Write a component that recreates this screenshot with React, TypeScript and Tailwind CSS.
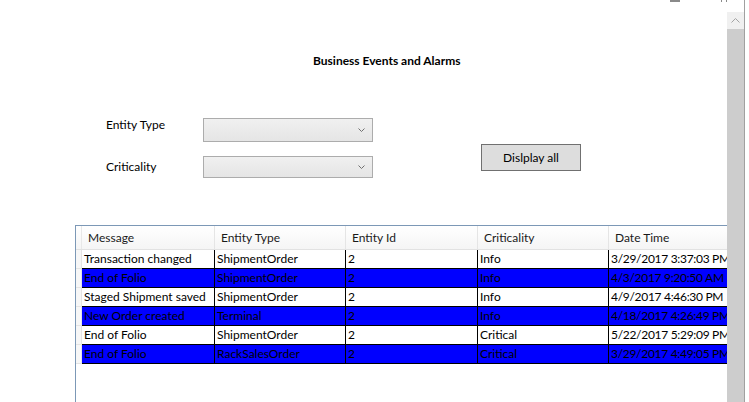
import React from "react";

type Row = {
  message: string;
  entityType: string;
  entityId: string;
  criticality: string;
  dateTime: string;
};

const ROWS: Row[] = [
  { message: "Transaction changed", entityType: "ShipmentOrder", entityId: "2", criticality: "Info", dateTime: "3/29/2017 3:37:03 PM" },
  { message: "End of Folio", entityType: "ShipmentOrder", entityId: "2", criticality: "Info", dateTime: "4/3/2017 9:20:50 AM" },
  { message: "Staged Shipment saved", entityType: "ShipmentOrder", entityId: "2", criticality: "Info", dateTime: "4/9/2017 4:46:30 PM" },
  { message: "New Order created", entityType: "Terminal", entityId: "2", criticality: "Info", dateTime: "4/18/2017 4:26:49 PM" },
  { message: "End of Folio", entityType: "ShipmentOrder", entityId: "2", criticality: "Critical", dateTime: "5/22/2017 5:29:09 PM" },
  { message: "End of Folio", entityType: "RackSalesOrder", entityId: "2", criticality: "Critical", dateTime: "3/29/2017 4:49:05 PM" },
];

const COLUMNS = [
  { title: "Message", width: "w-[133px]" },
  { title: "Entity Type", width: "w-[131px]" },
  { title: "Entity Id", width: "w-[132px]" },
  { title: "Criticality", width: "w-[131px]" },
  { title: "Date Time", width: "w-[150px]" },
];

function ComboBox({ height }: { height: string }) {
  return (
    <div
      className={`flex w-[170px] ${height} items-center justify-end border border-[#acacac] bg-gradient-to-b from-[#f0f0f0] to-[#e5e5e5] pr-[7px]`}
    >
      <svg width="7" height="4" viewBox="0 0 7 4" className="text-[#707070]">
        <path d="M0.5 0.5 L3.5 3.5 L6.5 0.5" fill="none" stroke="currentColor" strokeWidth="1" />
      </svg>
    </div>
  );
}

function Grid() {
  return (
    <div className="ml-[75px] h-[177px] w-[652px] overflow-hidden border-l border-t border-[#7c98b6]">
      <div className="flex h-[24px] w-max border-b border-[#e2e2e2] bg-gradient-to-b from-white to-[#f5f5f5]">
        <div className="w-[6px] border-r border-[#e8e8e8]" />
        {COLUMNS.map((c) => (
          <div
            key={c.title}
            className={`${c.width} flex items-center border-r border-[#e5e5e5] pl-[6px] text-[12px] text-[#1a1a1a]`}
          >
            {c.title}
          </div>
        ))}
      </div>
      {ROWS.map((r, i) => {
        const blue = i % 2 === 1;
        const cells = [r.message, r.entityType, r.entityId, r.criticality, r.dateTime];
        return (
          <div key={i} className="flex h-[19px] w-max">
            <div className="w-[6px] border-b border-r border-[#e4e4e4] bg-[#f7f7f7]" />
            <div className={`flex border-b border-black ${blue ? "bg-[#0000ff]" : "bg-white"}`}>
              {cells.map((v, j) => (
                <div
                  key={j}
                  className={`${COLUMNS[j].width} flex items-center whitespace-nowrap border-r border-black pl-[2px] text-[12px] text-black ${
                    j === 4 ? "tracking-[-0.3px]" : ""
                  }`}
                >
                  {v}
                </div>
              ))}
            </div>
          </div>
        );
      })}
    </div>
  );
}

export default function App() {
  return (
    <div
      className="relative flex h-[402px] w-[749px] overflow-hidden bg-white text-black"
      style={{ fontFamily: "Lato, 'Noto Sans', sans-serif" }}
    >
      {/* window caption buttons, cut off at the top */}
      <div className="absolute left-[670px] top-0 h-[2px] w-[10px] bg-[#8a8a8a]" />
      <div className="absolute left-[721px] top-0 h-[2px] w-px bg-[#8a8a8a]" />
      <div className="absolute left-[726px] top-0 h-[2px] w-px bg-[#8a8a8a]" />

      <div className="flex w-[727px] flex-col">
        <div className="ml-[313px] mt-[53px] h-[16px] text-[12px] font-bold leading-[16px]">
          Business Events and Alarms
        </div>

        <div className="mt-[49px] flex">
          <div className="ml-[106px] flex flex-col">
            <div className="flex h-[24px]">
              <div className="mt-[-1px] w-[97px] text-[12px] leading-[16px]">Entity Type</div>
              <ComboBox height="h-[24px]" />
            </div>
            <div className="mt-[14px] flex h-[22px] items-center">
              <div className="w-[97px] text-[12px] leading-[16px]">Criticality</div>
              <ComboBox height="h-[22px]" />
            </div>
          </div>
          <button className="ml-[108px] mt-[26px] flex h-[27px] w-[100px] items-center justify-center border border-[#707070] bg-[#dddddd] text-[12px] text-black">
            Dislplay all
          </button>
        </div>

        <div className="mt-[47px]">
          <Grid />
        </div>
      </div>

      {/* vertical scrollbar */}
      <div className="mt-[12px] flex w-[17px] flex-col">
        <div className="flex h-[17px] items-center justify-center bg-[#f0f0f0]">
          <svg width="9" height="5" viewBox="0 0 9 5" className="text-[#a3a3a3]">
            <path d="M0.5 4.5 L4.5 0.5 L8.5 4.5" fill="none" stroke="currentColor" strokeWidth="1" />
          </svg>
        </div>
        <div className="flex-1 bg-[#cdcdcd]" />
      </div>
      <div className="w-px bg-[#a0a0a0]" />
      <div className="flex-1 bg-white" />
    </div>
  );
}
